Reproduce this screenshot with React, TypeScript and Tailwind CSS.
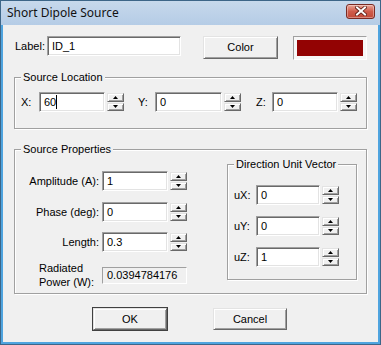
const raised =
  "border border-t-[#e3e3e3] border-l-[#e3e3e3] border-b-[#696969] border-r-[#696969] shadow-[inset_1px_1px_0_#fff,inset_-1px_-1px_0_#a0a0a0] bg-[#f0f0f0]"
const sunken =
  "border border-t-[#a0a0a0] border-l-[#a0a0a0] border-b-white border-r-white shadow-[inset_1px_1px_0_#696969,inset_-1px_-1px_0_#e3e3e3] bg-white"

const Arrow = ({ up }: { up?: boolean }) => (
  <svg width="5" height="3" viewBox="0 0 5 3">
    <polygon points={up ? "2.5,0 5,3 0,3" : "0,0 5,0 2.5,3"} fill="#000" />
  </svg>
)

const SpinBox = ({ value, className, caret }: { value: string; className: string; caret?: boolean }) => (
  <div className={`flex h-[20px] ${className}`}>
    <div className={`flex-1 flex items-center pl-[4px] ${sunken}`}>
      <span>{value}</span>
      {caret && <span className="w-px h-[14px] bg-black" />}
    </div>
    <div className="w-[17px] ml-[2px] flex flex-col gap-px py-px">
      <div className={`flex-1 flex items-center justify-center ${raised}`}>
        <Arrow up />
      </div>
      <div className={`flex-1 flex items-center justify-center ${raised}`}>
        <Arrow />
      </div>
    </div>
  </div>
)

const Group = ({ title, className, children }: { title: string; className: string; children: React.ReactNode }) => (
  <div
    className={`relative border border-[#a0a0a0] shadow-[inset_1px_1px_0_#fff,1px_1px_0_#fff] ${className}`}
  >
    <span className="absolute left-[6px] top-[-8px] px-[2px] bg-[#f0f0f0] leading-[14px]">{title}</span>
    {children}
  </div>
)

export default function App() {
  return (
    <div className="w-[381px] h-[345px] flex flex-col border border-[#3d6688] bg-[#4fa4df] font-['Liberation_Sans',Arial,sans-serif] text-[11px] text-black">
      <div className="h-[24px] flex items-center justify-between pl-[6px] pr-[5px] bg-gradient-to-b from-[#c7d9ec] to-[#b5cce6]">
        <span className="font-['Noto_Sans',sans-serif] text-[12px] text-[#111]">Short Dipole Source</span>
        <div className="w-[29px] h-[15px] mt-[-4px] flex items-center justify-center rounded-[3px] border border-[#7a2a22] bg-gradient-to-b from-[#e9a597] via-[#cf5b4a] to-[#c24a38] shadow-[inset_0_0_0_1px_rgba(255,255,255,0.35)]">
          <svg width="12" height="10" viewBox="0 0 12 10">
            <path d="M2 1.5 L10 8.5 M10 1.5 L2 8.5" stroke="#5a1a12" strokeWidth="3.6" strokeLinecap="square" />
            <path d="M2 1.5 L10 8.5 M10 1.5 L2 8.5" stroke="#fff" strokeWidth="2" strokeLinecap="square" />
          </svg>
        </div>
      </div>

      <div className="flex-1 mx-[2px] mb-[2px] bg-[#f0f0f0] pt-[11px] px-[11px]">
        <div className="flex items-start">
          <span className="ml-[1px] w-[32px] h-[20px] flex items-center">Label:</span>
          <div className={`w-[134px] h-[20px] flex items-center pl-[4px] ${sunken}`}>ID_1</div>
          <button className={`ml-[22px] w-[75px] h-[23px] flex items-center justify-center ${raised}`}>Color</button>
          <div className="ml-[15px] w-[74px] h-[24px] p-[3px] border border-t-[#a0a0a0] border-l-[#a0a0a0] border-b-white border-r-white bg-[#f7f7f7]">
            <div className="w-full h-full bg-[#930303]" />
          </div>
        </div>

        <Group title="Source Location" className="mt-[17px] h-[52px]">
          <div className="flex items-center mt-[14px] pl-[6px]">
            <span className="w-[18px]">X:</span>
            <SpinBox value="60" caret className="w-[85px]" />
            <span className="ml-[14px] w-[17px]">Y:</span>
            <SpinBox value="0" className="w-[86px]" />
            <span className="ml-[15px] w-[16px]">Z:</span>
            <SpinBox value="0" className="w-[85px]" />
          </div>
        </Group>

        <Group title="Source Properties" className="mt-[20px] h-[145px]">
          <div className="flex items-start">
            <div className="w-[172px] pt-[21px] flex flex-col">
              <div className="flex items-center">
                <span className="w-[84px] text-right">Amplitude (A):</span>
                <SpinBox value="1" className="ml-[3px] w-[85px]" />
              </div>
              <div className="flex items-center mt-[11px]">
                <span className="w-[84px] text-right">Phase (deg):</span>
                <SpinBox value="0" className="ml-[3px] w-[85px]" />
              </div>
              <div className="flex items-center mt-[10px]">
                <span className="w-[84px] text-right">Length:</span>
                <SpinBox value="0.3" className="ml-[3px] w-[85px]" />
              </div>
              <div className="flex items-center mt-[9px]">
                <span className="w-[87px] pl-[24px] leading-[14px]">
                  Radiated
                  <br />
                  Power (W):
                </span>
                <div className="w-[85px] h-[17px] flex items-center pl-[4px] border border-t-[#a0a0a0] border-l-[#a0a0a0] border-b-white border-r-white bg-[#f0f0f0]">
                  0.0394784176
                </div>
              </div>
            </div>

            <Group title="Direction Unit Vector" className="ml-[40px] mt-[14px] w-[130px] h-[116px]">
              <div className="flex flex-col pt-[20px]">
                <div className="flex items-center pl-[6px]">
                  <span className="w-[22px]">uX:</span>
                  <SpinBox value="0" className="w-[83px]" />
                </div>
                <div className="flex items-center pl-[6px] mt-[11px]">
                  <span className="w-[22px]">uY:</span>
                  <SpinBox value="0" className="w-[83px]" />
                </div>
                <div className="flex items-center pl-[6px] mt-[11px]">
                  <span className="w-[22px]">uZ:</span>
                  <SpinBox value="1" className="w-[83px]" />
                </div>
              </div>
            </Group>
          </div>
        </Group>

        <div className="flex mt-[14px]">
          <button className={`ml-[79px] w-[74px] h-[22px] flex items-center justify-center outline outline-1 outline-[#404040] -outline-offset-0 ${raised}`}>
            OK
          </button>
          <button className={`ml-[46px] w-[74px] h-[22px] flex items-center justify-center ${raised}`}>Cancel</button>
        </div>
      </div>
    </div>
  )
}
